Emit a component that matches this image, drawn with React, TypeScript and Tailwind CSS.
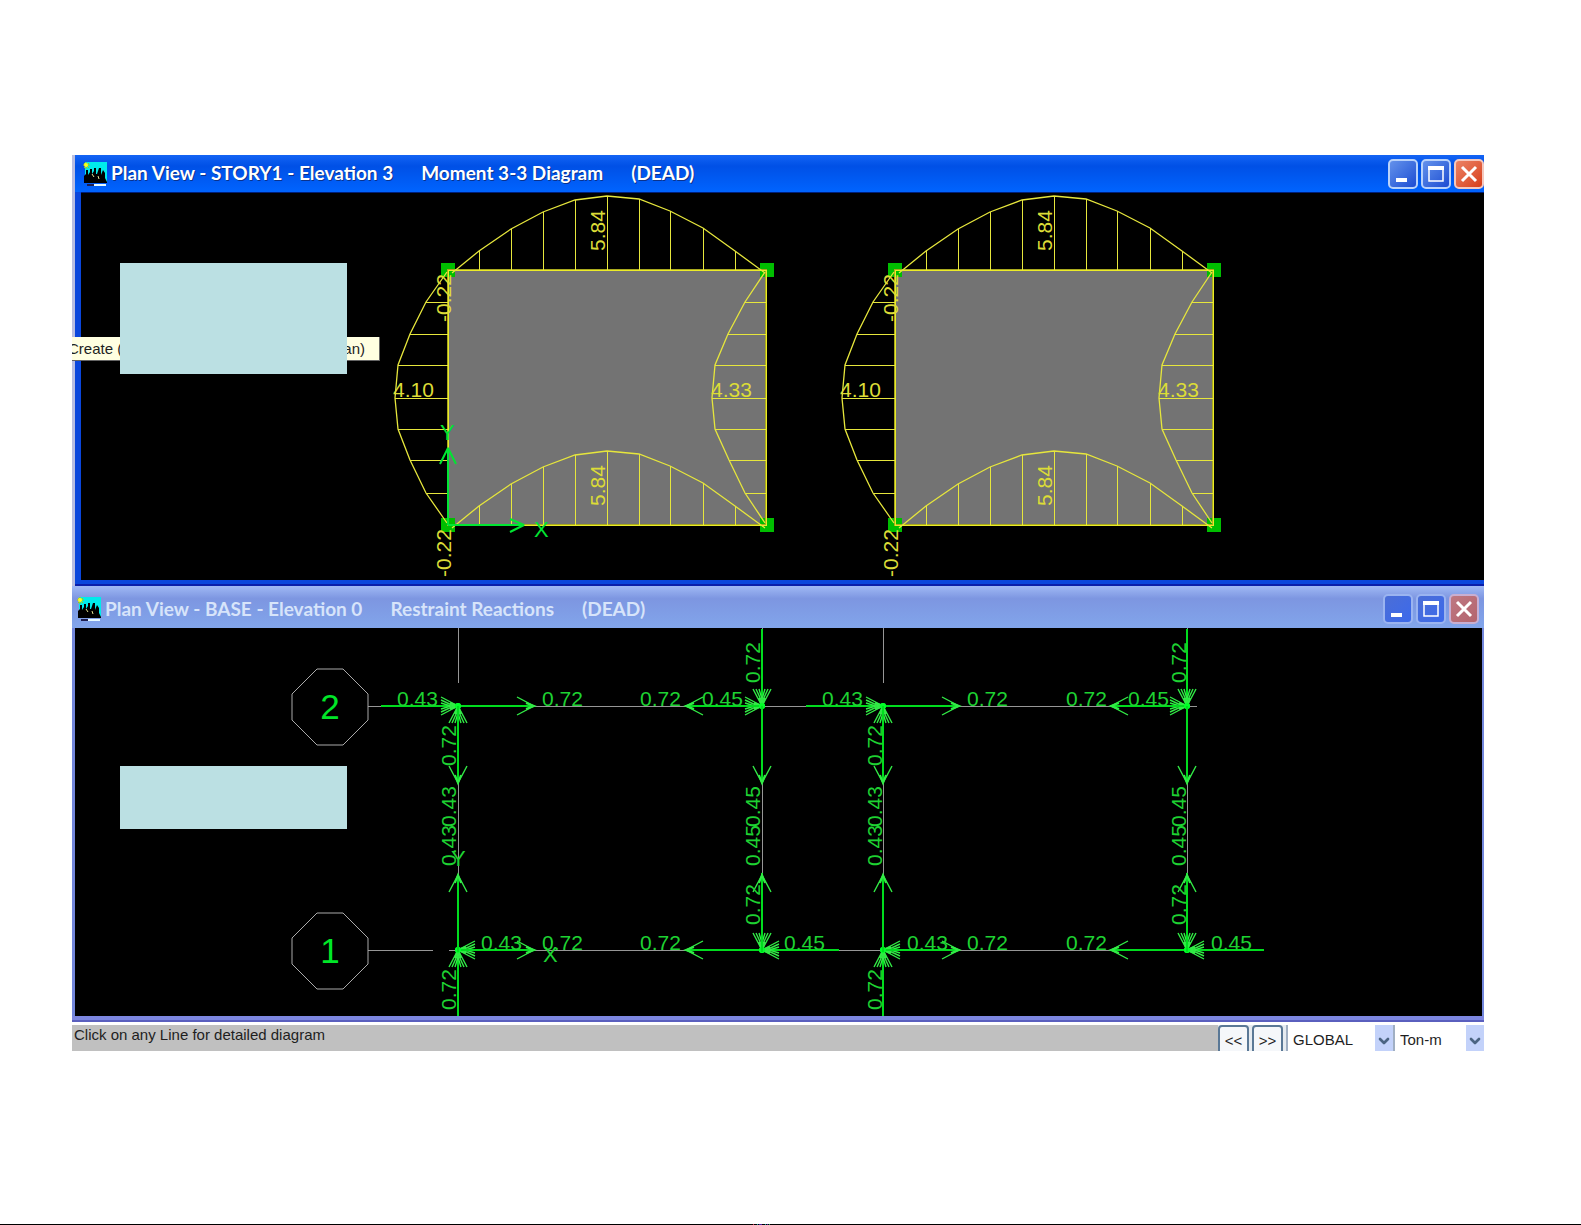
import { ReactNode } from 'react';
import { ChevronDown } from 'lucide-react';

type Point = [number, number];
type Direction = 'left' | 'right' | 'up' | 'down';

const angles: Record<Direction, number> = { right: 0, down: 90, left: 180, up: 270 };

// moment ordinates of one bay, measured from its lower left corner upwards
const spanX = [31, 63, 95, 127, 159, 191, 222, 255, 287];
const spanMoment = [19, 41, 58, 70, 74, 71, 59, 42, 19];
const sideY = [32, 64, 95, 128, 159, 190, 223];
const leftMoment = [22, 38, 50, 53, 50, 38, 22];
const rightMoment = [21, 38, 51, 54, 51, 37, 21];

const BAY_W = 318;
const BAY_H = 255;

const toPath = (points: Point[]) => points.map((p) => p.join(',')).join(' ');

function Label({ x, y, vertical, size = 21, children }: { x: number; y: number; vertical?: boolean; size?: number; children: ReactNode }) {
  return (
    <text x={x} y={y} fontSize={size} stroke="none" transform={vertical ? `rotate(-90 ${x} ${y})` : undefined}>
      {children}
    </text>
  );
}

function SpanMoment({ y }: { y: number }) {
  const curve: Point[] = [[4, y + 3], ...spanX.map((x, i): Point => [x, y - spanMoment[i]]), [BAY_W - 1, y + 3]];
  return (
    <>
      <polyline points={toPath(curve)} strokeWidth="1.3" />
      {spanX.map((x, i) => (
        <line key={x} x1={x} y1={y} x2={x} y2={y - spanMoment[i]} shapeRendering="crispEdges" />
      ))}
      <Label x={157} y={y - 19} vertical>5.84</Label>
    </>
  );
}

function SideMoment({ x, values, label }: { x: number; values: number[]; label: string }) {
  const curve: Point[] = [[x - 1, 2], ...sideY.map((y, i): Point => [x - values[i], y]), [x - 1, BAY_H - 2]];
  return (
    <>
      <polyline points={toPath(curve)} strokeWidth="1.3" />
      {sideY.map((y, i) => (
        <line key={y} x1={x} y1={y} x2={x - values[i]} y2={y} shapeRendering="crispEdges" />
      ))}
      <Label x={x - 55} y={127}>{label}</Label>
    </>
  );
}

function MomentBay({ x, y }: { x: number; y: number }) {
  const joints: Point[] = [[-7, -7], [BAY_W - 6, -7], [-7, BAY_H - 7], [BAY_W - 6, BAY_H - 7]];
  return (
    <g transform={`translate(${x} ${y})`} fill="none" stroke="#e6e63c">
      <rect width={BAY_W} height={BAY_H} fill="#737373" stroke="none" />
      {joints.map(([jx, jy]) => (
        <rect key={`${jx}${jy}`} x={jx} y={jy} width="14" height="14" fill="#00be00" stroke="none" />
      ))}
      <rect width={BAY_W} height={BAY_H} stroke="#aaaa1e" strokeWidth="2" />
      <rect width={BAY_W} height={BAY_H} shapeRendering="crispEdges" stroke="#ebeb28" />
      <g className="[&_text]:fill-[#dcdc37]">
        <SpanMoment y={0} />
        <SpanMoment y={BAY_H} />
        <SideMoment x={0} values={leftMoment} label="4.10" />
        <SideMoment x={BAY_W} values={rightMoment} label="4.33" />
        <Label x={3} y={52} vertical>-0.22</Label>
        <Label x={3} y={307} vertical>-0.22</Label>
      </g>
    </g>
  );
}

function MomentDiagram() {
  return (
    <svg className="block h-[388px] w-full font-['Liberation_Sans',Arial,sans-serif]" role="img" aria-label="Moment 3-3 diagram">
      <MomentBay x={367} y={78} />
      <MomentBay x={814} y={78} />
      <g fill="none" stroke="#00e632" strokeWidth="2" strokeLinejoin="bevel">
        <path d="M367 333V257M359 272L367 256L375 272" />
        <path d="M367 333H443M429 327L443 333L429 340" />
      </g>
      <g fill="#00e632">
        <Label x={359} y={248} size={22}>Y</Label>
        <Label x={453} y={345} size={22}>X</Label>
      </g>
    </svg>
  );
}

// open-headed load arrow ending at x, y
function Arrow({ x, y, dir, multi }: { x: number; y: number; dir: Direction; multi?: boolean }) {
  return (
    <g transform={`translate(${x} ${y}) rotate(${angles[dir]})`}>
      <path d="M-77 0H0" stroke="#00dc1e" strokeWidth="2" shapeRendering="crispEdges" />
      <path d="M-17 -9L0 0L-17 9" />
      <path d="M-8 -3L0 0L-8 3" strokeWidth="2" />
      {multi && (
        <>
          <path d="M-17 -6L-4 0L-17 6" />
          <path d="M-17 -3L-7 0L-17 3" />
          <circle r="3" fill="#00ff28" stroke="none" />
        </>
      )}
    </g>
  );
}

const TOP = 78;
const BOTTOM = 322;

const reactions: { x: number; y: number; dir: Direction; multi?: boolean }[] = [
  ...[383, 808].flatMap((x) => [
    { x, y: TOP, dir: 'right' as const, multi: true },
    { x: x + 76, y: TOP, dir: 'right' as const },
    { x, y: TOP, dir: 'up' as const, multi: true },
    { x, y: TOP + 77, dir: 'down' as const },
    { x, y: BOTTOM, dir: 'left' as const, multi: true },
    { x: x + 76, y: BOTTOM, dir: 'right' as const },
    { x, y: BOTTOM, dir: 'up' as const, multi: true },
    { x, y: BOTTOM - 75, dir: 'up' as const },
  ]),
  ...[687, 1112].flatMap((x) => [
    { x, y: TOP, dir: 'right' as const, multi: true },
    { x: x - 76, y: TOP, dir: 'left' as const },
    { x, y: TOP, dir: 'down' as const, multi: true },
    { x, y: TOP + 77, dir: 'down' as const },
    { x, y: BOTTOM, dir: 'left' as const, multi: true },
    { x: x - 76, y: BOTTOM, dir: 'left' as const },
    { x, y: BOTTOM, dir: 'down' as const, multi: true },
    { x, y: BOTTOM - 75, dir: 'up' as const },
  ]),
];

const rowLabels: [number, number, string][] = [
  [322, TOP, '0.43'], [467, TOP, '0.72'], [565, TOP, '0.72'], [627, TOP, '0.45'],
  [747, TOP, '0.43'], [892, TOP, '0.72'], [991, TOP, '0.72'], [1053, TOP, '0.45'],
  [406, BOTTOM, '0.43'], [467, BOTTOM, '0.72'], [565, BOTTOM, '0.72'], [709, BOTTOM, '0.45'],
  [832, BOTTOM, '0.43'], [892, BOTTOM, '0.72'], [991, BOTTOM, '0.72'], [1136, BOTTOM, '0.45'],
];

const columnLabels: [number, number, string][] = [
  ...[381, 807].flatMap((x): [number, number, string][] => [[x, 138, '0.72'], [x, 199, '0.43'], [x, 238, '0.43'], [x, 382, '0.72']]),
  ...[685, 1111].flatMap((x): [number, number, string][] => [[x, 55, '0.72'], [x, 199, '0.45'], [x, 238, '0.45'], [x, 297, '0.72']]),
];

function GridBubble({ y, name }: { y: number; name: string }) {
  return (
    <g transform={`translate(255 ${y})`}>
      <path d="M-13 -38H13L38 -13V13L13 38H-13L-38 13V-13Z" fill="none" stroke="#aaaaaa" />
      <text y="12" fontSize="35" textAnchor="middle" fill="#00e628">{name}</text>
    </g>
  );
}

function ReactionDiagram() {
  return (
    <svg className="block h-[388px] w-full font-['Liberation_Sans',Arial,sans-serif]" role="img" aria-label="Restraint reactions">
      <path
        d="M293 78H1122M293 322H358M374 322H1112M383 0V55M383 78V322M687 0V322M808 0V55M808 78V322M1112 0V322"
        fill="none"
        stroke="#969696"
        shapeRendering="crispEdges"
      />
      <GridBubble y={TOP + 1} name="2" />
      <GridBubble y={BOTTOM + 1} name="1" />
      <g fill="none" stroke="#32eb46" strokeWidth="1.4">
        {reactions.map((r, i) => <Arrow key={i} {...r} />)}
      </g>
      <g fill="#1ed232">
        {rowLabels.map(([x, y, text]) => <Label key={`${x}-${y}`} x={x} y={y}>{text}</Label>)}
        {columnLabels.map(([x, y, text]) => <Label key={`${x}-${y}`} x={x} y={y} vertical>{text}</Label>)}
        <Label x={376} y={238} size={22}>Y</Label>
        <Label x={468} y={334} size={22}>X</Label>
      </g>
    </svg>
  );
}

function AppIcon() {
  return (
    <svg width="24" height="24" viewBox="0 0 24 24" className="shrink-0">
      <rect x="2" width="22" height="21" fill="#00ebeb" />
      <path d="M1 21V14L3 12V8H5V13L7 10V7H9V12L11 9V6H13V12H14L16 6H18V13L20 8L22 11V16L24 20V21Z" fill="#000" />
      <path d="M9 12L11 15M15 14L16 17" stroke="#e6e696" />
      <path d="M4 23H11" stroke="#1e1e50" strokeWidth="2" />
      <path d="M11 23H23" stroke="#e6faff" strokeWidth="2" />
      <path d="M3 0V7M0 3H7M1 1L6 6M6 1L1 6" stroke="#b4c800" />
      <circle cx="3" cy="3" r="2" fill="#ffff1e" />
    </svg>
  );
}

function WindowButtons({ active }: { active: boolean }) {
  const base = 'flex h-[30px] w-[30px] items-center justify-center rounded-[5px] border-2';
  const blue = active
    ? 'border-[#b9d2fa] bg-linear-to-br from-[#6491eb] to-[#1e4bd2]'
    : 'border-[#9bb4f0] bg-linear-to-br from-[#4b6ed7] to-[#3c69eb]';
  const red = active
    ? 'border-[#f5c8be] bg-linear-to-br from-[#eb8264] to-[#d73c14]'
    : 'border-[#c8afd2] bg-linear-to-br from-[#be7882] to-[#b4646e]';
  return (
    <div className="flex shrink-0 gap-[3px]">
      <button type="button" aria-label="Minimize" className={`${base} ${blue}`}>
        <svg width="22" height="22"><rect x="4" y="15" width="11" height="4" fill="#fff" /></svg>
      </button>
      <button type="button" aria-label="Maximize" className={`${base} ${blue}`}>
        <svg width="22" height="22"><path d="M4 4H18V18H4Z" fill="none" stroke="#fff" strokeWidth="1.5" /><rect x="3" y="3" width="16" height="4" fill="#fff" /></svg>
      </button>
      <button type="button" aria-label="Close" className={`${base} ${red}`}>
        <svg width="22" height="22"><path d="M4 4L18 18M18 4L4 18" stroke="#fff" strokeWidth="3" /></svg>
      </button>
    </div>
  );
}

function TitleText({ parts }: { parts: string[] }) {
  return (
    <h2 className="flex grow gap-7 font-['Lato',sans-serif] text-[19px] font-bold whitespace-nowrap">
      {parts.map((part) => <span key={part}>{part}</span>)}
    </h2>
  );
}

function StatusSelect({ label, value, className }: { label: string; value: string; className: string }) {
  return (
    <div className={`relative h-full border-l-2 border-[#a0afc3] bg-white ${className}`}>
      <select aria-label={label} defaultValue={value} className="h-full w-full appearance-none pl-[5px] text-[15px] text-[#1e1e1e]">
        <option>{value}</option>
      </select>
      <span className="pointer-events-none absolute inset-y-0 right-0 flex w-[18px] items-center justify-center bg-[#c3d2fa]">
        <ChevronDown size={16} strokeWidth={4} className="text-[#4b6482]" />
      </span>
    </div>
  );
}

export default function App() {
  const navButton = 'h-[31px] w-[31px] rounded-[4px] border-2 border-[#5a7896] bg-[#f5f7fa] text-[15px] leading-none text-[#1e1e1e]';

  return (
    <div className="flex min-h-screen flex-col bg-white font-['Liberation_Sans',Arial,sans-serif]">
      <main className="relative mt-[155px] mr-[97px] ml-[72px]">
        <section className="border-l-[3px] border-[#b9bee1] bg-[#0a46dc]">
          <header className="flex h-[37px] items-center gap-1 bg-linear-to-b from-[#1464f5] via-[#0050e6] via-30% to-[#0064ff] pl-2 text-white [text-shadow:1px_1px_#0a328c]">
            <AppIcon />
            <TitleText parts={['Plan View - STORY1 - Elevation 3', 'Moment 3-3 Diagram', '(DEAD)']} />
            <WindowButtons active />
          </header>
          <div className="border-b-4 border-l-[6px] border-[#0a46dc] bg-black shadow-[inset_0_1px_#001e78]">
            <MomentDiagram />
          </div>
          <div className="h-[2px] bg-[#0a1eaa]" />
        </section>

        <section className="bg-[#7387dc]">
          <header className="flex h-[42px] items-center gap-1 bg-linear-to-b from-[#a0b9f5] via-[#7d96e1] via-30% to-[#82a5eb] pt-1 pr-[5px] pl-[5px] text-[#d7e4fa]">
            <AppIcon />
            <TitleText parts={['Plan View - BASE - Elevation 0', 'Restraint Reactions', '(DEAD)']} />
            <WindowButtons active={false} />
          </header>
          <div className="mr-[2px] ml-[3px] bg-black">
            <ReactionDiagram />
          </div>
          <div className="h-[6px] border-b-2 border-[#5a5fbe] bg-[#7d87e1]" />
        </section>

        <footer className="mt-[3px] flex h-[26px] items-start overflow-hidden bg-[#c0c0c0]">
          <p className="grow pl-[2px] text-[15px] leading-5 text-[#1e1e1e]">Click on any Line for detailed diagram</p>
          <div className="flex h-[31px] shrink-0 gap-[3px] bg-[#e6ebf0]">
            <button type="button" className={navButton}>&lt;&lt;</button>
            <button type="button" className={navButton}>&gt;&gt;</button>
            <div className="flex">
              <StatusSelect label="Coordinate system" value="GLOBAL" className="w-[107px]" />
              <StatusSelect label="Units" value="Ton-m" className="w-[91px]" />
            </div>
          </div>
        </footer>

        <div className="absolute top-[182px] left-0 flex h-6 w-[308px] items-center justify-between overflow-hidden border-r border-b border-[#646464] bg-[#ffffe1] pt-px pr-[14px] text-[15px] text-[#1e1e1e]">
          <span className="-ml-1">Create (</span>
          <span>an)</span>
        </div>
        <div className="absolute top-[108px] left-12 h-[111px] w-[227px] bg-[#bbe0e3]" />
        <div className="absolute top-[611px] left-12 h-[63px] w-[227px] bg-[#bbe0e3]" />
      </main>

      <div className="mt-auto h-px bg-black pl-[753px]">
        <svg width="17" height="1" className="block">
          <path d="M0 0H1" stroke="#c8324b" strokeWidth="2" />
          <path d="M4 0H5M12 0H13" stroke="#1e9696" strokeWidth="2" />
          <path d="M6 0H9M14 0H15" stroke="#4b1ea0" strokeWidth="2" />
          <path d="M16 0H17" stroke="#32a05a" strokeWidth="2" />
        </svg>
      </div>
    </div>
  );
}
